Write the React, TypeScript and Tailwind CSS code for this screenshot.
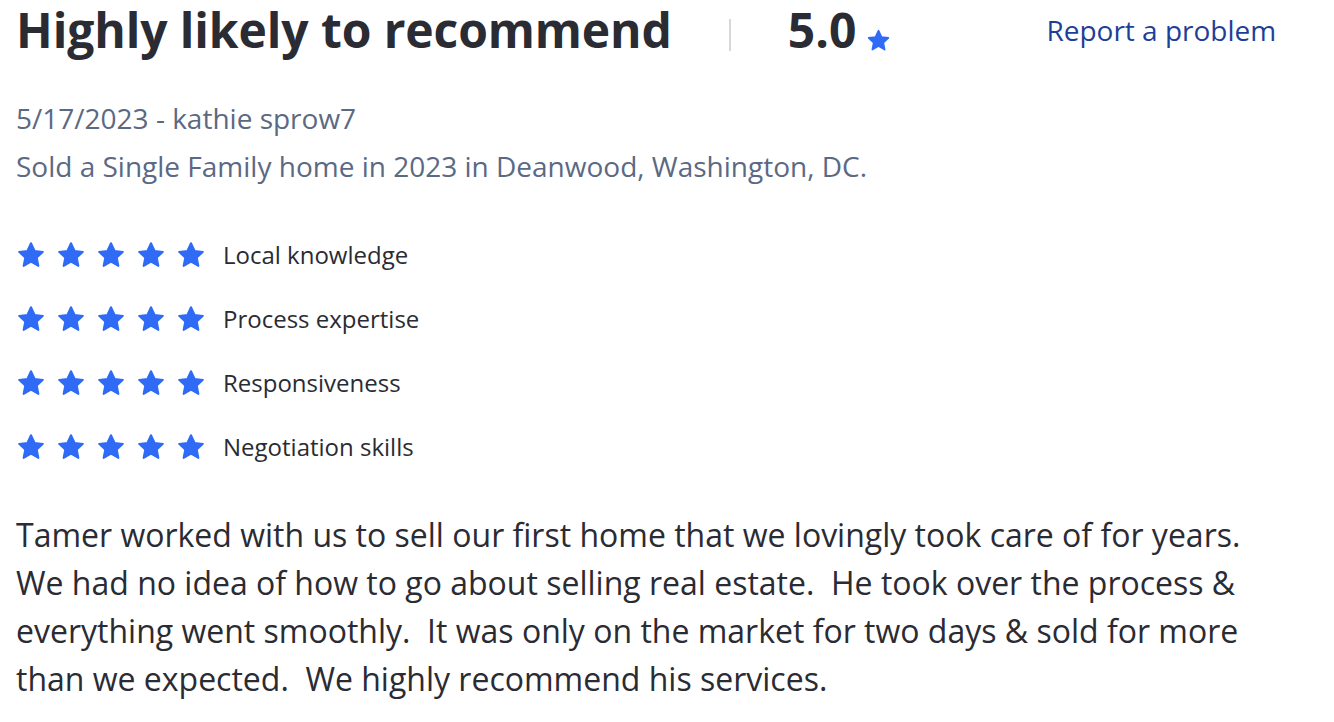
function Star({ className }: { className?: string }) {
  return (
    <svg viewBox="0 0 24 24" className={className} aria-hidden="true">
      <path
        d="M12 2.6l2.9 6.1 6.6.8-4.9 4.6 1.3 6.6L12 17.4l-5.9 3.3 1.3-6.6L2.5 9.5l6.6-.8z"
        fill="#2f6bf5"
        stroke="#2f6bf5"
        strokeWidth="1.6"
        strokeLinejoin="round"
      />
    </svg>
  )
}

const ratings = ['Local knowledge', 'Process expertise', 'Responsiveness', 'Negotiation skills']

export default function App() {
  return (
    <div className="min-h-screen bg-white pl-4 text-[#2a2b33]" style={{ fontFamily: '"Open Sans", sans-serif' }}>
      {/* Cabecera */}
      <div className="flex items-start">
        <h1 className="text-[48px] leading-[60px] font-bold tracking-[-0.1px]">Highly likely to recommend</h1>
        <div className="ml-[57px] mt-[19px] h-[32px] w-[2px] bg-[#d8d8dc]" />
        <div className="ml-[57px] flex items-end">
          <span className="text-[48px] leading-[60px] font-bold">5.0</span>
          <Star className="ml-[10px] mb-[7px] h-[25px] w-[25px]" />
        </div>
        <a href="#" className="ml-[155px] mt-[10px] text-[28px] leading-[40px] text-[#1e3f98]">
          Report a problem
        </a>
      </div>

      <div className="mt-[34px] text-[28px] leading-[48px] text-[#5b6983]">
        <p>5/17/2023 - kathie sprow7</p>
        <p>Sold a Single Family home in 2023 in Deanwood, Washington, DC.</p>
      </div>

      <div className="mt-[33px] flex flex-col">
        {ratings.map((r) => (
          <div key={r} className="flex h-[64px] items-center">
            <div className="flex gap-[10px]">
              {[0, 1, 2, 3, 4].map((i) => (
                <Star key={i} className="h-[30px] w-[30px]" />
              ))}
            </div>
            <span className="ml-[17px] text-[24px] leading-[32px] text-[#2a2b33]">{r}</span>
          </div>
        ))}
      </div>

      <p className="mt-[32px] w-[1255px] whitespace-pre-wrap text-[32px] leading-[48px] text-[#2a2b33]">
        Tamer worked with us to sell our first home that we lovingly took care of for years.  We had no idea of how to go about selling real estate.  He took over the process &amp; everything went smoothly.  It was only on the market for two days &amp; sold for more than we expected.  We highly recommend his services.
      </p>
    </div>
  )
}
